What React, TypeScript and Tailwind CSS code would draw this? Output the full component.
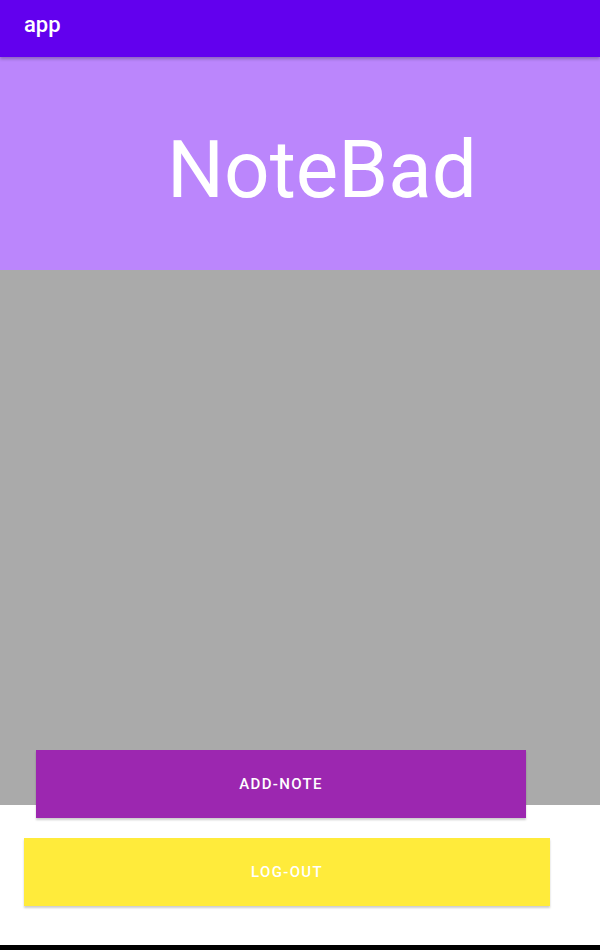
export default function App() {
  return (
    <div className="flex h-[950px] w-[600px] flex-col overflow-hidden bg-white font-['Roboto',sans-serif]">
      <header className="relative z-10 h-[57px] shrink-0 bg-[#6200ee] px-6 pt-[14px] shadow-[0_2px_3px_rgba(0,0,0,0.25)]">
        <h1 className="text-[22px] font-medium leading-none text-white">app</h1>
      </header>

      <section className="h-[213px] shrink-0 bg-[#bb86fc] pl-[167px] pt-[73px]">
        <p className="text-[80px] leading-none text-white">NoteBad</p>
      </section>

      <section className="h-[535px] shrink-0 bg-[#aaaaaa]"></section>

      <div className="relative -mt-[55px] flex flex-1 flex-col">
        <button className="ml-[36px] flex h-[68px] w-[490px] items-center justify-center bg-[#9c27b0] text-[15px] font-medium uppercase tracking-[0.089em] text-white shadow-[0_2px_2px_rgba(0,0,0,0.2)]">
          Add-Note
        </button>
        <button className="ml-[24px] mt-[20px] flex h-[68px] w-[526px] items-center justify-center bg-[#ffeb3b] text-[15px] font-medium uppercase tracking-[0.089em] text-white shadow-[0_2px_2px_rgba(0,0,0,0.2)]">
          Log-Out
        </button>
      </div>

      <div className="h-[5px] shrink-0 bg-black"></div>
    </div>
  );
}
